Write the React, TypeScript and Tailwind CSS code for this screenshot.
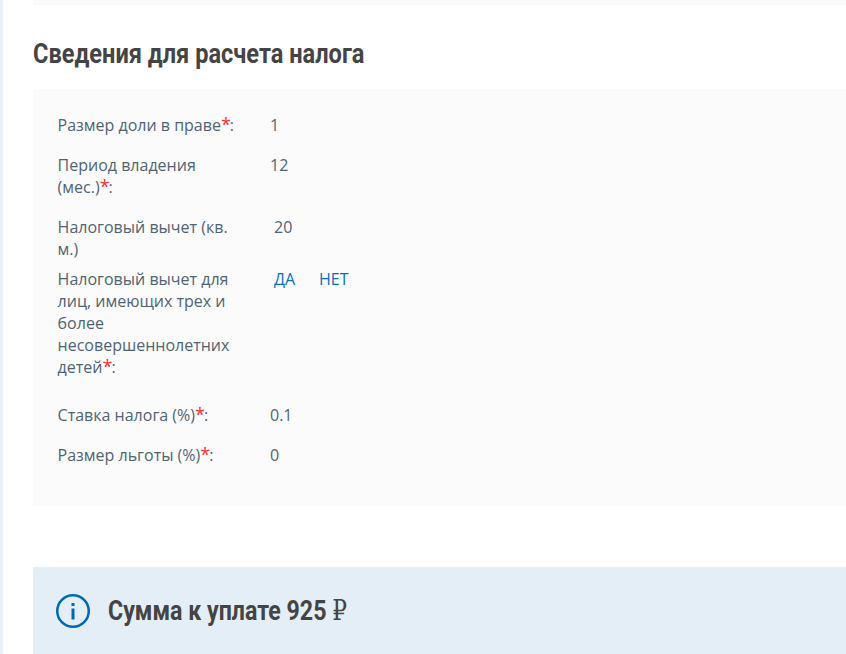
const Req = () => <span className="mr-[-1px] text-[18px] leading-none text-[#ff3030]">*</span>;

const headingFont = "inline-block origin-left whitespace-nowrap font-['Roboto',sans-serif] font-bold text-[#444444] text-[28px] leading-[36px]";

export default function App() {
  return (
    <div className="h-[654px] w-[846px] overflow-hidden bg-white font-['Open_Sans',sans-serif] text-[16px] leading-[22px] text-[#506373]">
      <div className="h-full border-l-[3px] border-[#e9eff7] pl-[30px]">
        <div className="h-[5px] bg-[#fafafa]" />

        <div className="mt-[31px] h-[53px]">
          <h2 className={`${headingFont} scale-x-[0.842]`}>Сведения для расчета налога</h2>
        </div>

        <div className="h-[417px] bg-[#fbfbfb] pl-[24.6px] pt-[25px]">
          <div className="mb-[18px] flex">
            <div className="w-[180px]">Размер доли в праве<Req />:</div>
            <div className="ml-[32.4px]">1</div>
          </div>
          <div className="mb-[18px] flex">
            <div className="w-[180px]">Период владения (мес.)<Req />:</div>
            <div className="ml-[32.4px]">12</div>
          </div>
          <div className="mb-[8px] flex">
            <div className="w-[180px]">Налоговый вычет (кв. м.)</div>
            <div className="ml-[36.4px]">20</div>
          </div>
          <div className="mb-[26px] flex">
            <div className="w-[180px]">Налоговый вычет для лиц, имеющих трех и более несовершеннолетних детей<Req />:</div>
            <div className="ml-[36.4px] flex gap-[24px] text-[#0b6fb8]">
              <span>ДА</span>
              <span>НЕТ</span>
            </div>
          </div>
          <div className="mb-[18px] flex">
            <div className="w-[180px]">Ставка налога (%)<Req />:</div>
            <div className="ml-[32.4px]">0.1</div>
          </div>
          <div className="flex">
            <div className="w-[180px]">Размер льготы (%)<Req />:</div>
            <div className="ml-[32.4px]">0</div>
          </div>
        </div>

        <div className="mt-[61px] flex h-[87px] items-center bg-[#e3eef7] pl-[23px]">
          <svg width="34" height="34" viewBox="0 0 34 34" fill="none" className="shrink-0">
            <circle cx="17" cy="17" r="15.75" stroke="#0068b4" strokeWidth="2.5" />
            <rect x="15.5" y="14.5" width="3" height="11" fill="#0068b4" />
            <rect x="15.5" y="9" width="3" height="3" fill="#0068b4" />
          </svg>
          <div className="ml-[18px]">
            <div className={`${headingFont} scale-x-[0.828]`}>
              Сумма к уплате 925 <span className="font-['DejaVu_Serif',serif] font-normal text-[28px]">₽</span>
            </div>
          </div>
        </div>
      </div>
    </div>
  );
}
